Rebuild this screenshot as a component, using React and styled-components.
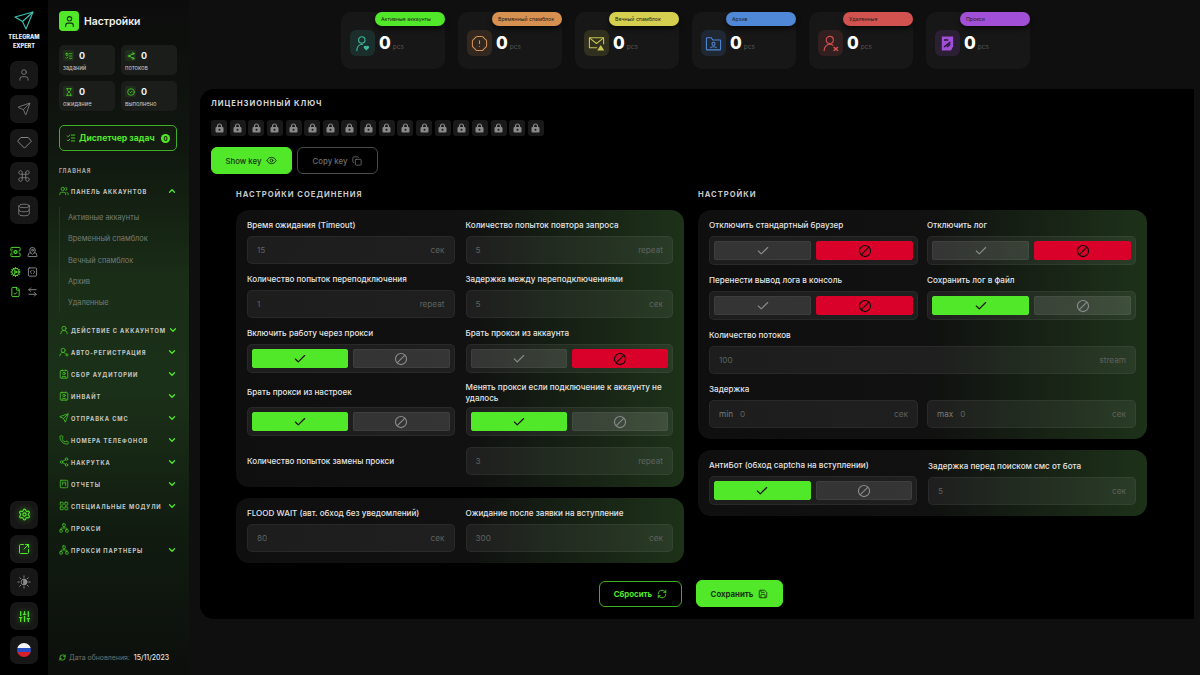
import React from "react";
import styled, { createGlobalStyle } from "styled-components";
import {
  User, Send, Command, Database, ServerCog, MapPinned, Cog, SquareCode, FileCheck, ArrowLeftRight,
  Settings, SquareArrowOutUpRight, SlidersVertical, ChevronDown, ChevronUp, Check, Eye, Copy, Save,
  RefreshCw, Users, UserRound, UserRoundPlus, Contact, Phone, Share2, Network, SquareKanban, ListChecks,
  Hourglass, CircleCheck, ListTodo, LayoutGrid, OctagonAlert,
} from "lucide-react";

const GREEN = "#52e82a";
const RED = "#d90029";

const GlobalStyle = createGlobalStyle`
  html, body { margin: 0; padding: 0; background: #0f0f0f; }
  body { font-family: "Inter", "Noto Sans", sans-serif; color: #eee; }
  * { box-sizing: border-box; }
`;

const Page = styled.div`
  display: flex;
  width: 1200px;
  height: 675px;
  overflow: hidden;
  background: #0f0f0f;
`;

const Rail = styled.aside`
  width: 48px;
  flex: none;
  background: #000;
  display: flex;
  flex-direction: column;
  align-items: center;
  padding-top: 11px;
`;

const Logo = styled.div`
  display: flex;
  flex-direction: column;
  align-items: center;
  font-size: 5.6px;
  line-height: 8.5px;
  font-weight: 800;
  color: #f0f0f0;
  text-align: center;
  margin-bottom: 11px;
  svg { margin-bottom: 3px; }
`;

const RailGroup = styled.div`
  display: flex;
  flex-direction: column;
  gap: 5.8px;
`;

const RailButton = styled.div`
  width: 28px;
  height: 28px;
  border-radius: 7px;
  background: #171717;
  display: flex;
  align-items: center;
  justify-content: center;
  color: ${(p) => (p.$on ? GREEN : "#8b8b8b")};
  svg { filter: ${(p) => (p.$on ? `drop-shadow(0 0 3px ${GREEN}99)` : "none")}; }
`;

const MiniGrid = styled.div`
  display: grid;
  grid-template-columns: 11px 11px;
  gap: 9px 6px;
  margin-top: 22px;
`;

const MiniIcon = styled.div`
  height: 11px;
  display: flex;
  align-items: center;
  justify-content: center;
  color: ${(p) => (p.$on ? GREEN : "#8e8e8e")};
`;

const RailBottom = styled(RailGroup)`
  margin-top: auto;
  margin-bottom: 11px;
`;

const Flag = styled.div`
  width: 14px;
  height: 14px;
  border-radius: 50%;
  background: linear-gradient(180deg, #f4f4f4 0 33%, #2b4fc0 33% 66%, #d6202c 66%);
`;

const Sidebar = styled.nav`
  width: 141px;
  flex: none;
  padding: 11px 12px 0 11px;
  display: flex;
  flex-direction: column;
  background: linear-gradient(180deg, #0c0c0c 0%, #10170f 22%, #1a2e17 42%, #1b3018 58%, #111c10 78%, #0c0f0c 100%);
`;

const Head = styled.div`
  display: flex;
  align-items: center;
  gap: 5px;
  font-size: 10.4px;
  font-weight: 600;
  color: #f2f2f2;
`;

const HeadIcon = styled.div`
  width: 20px;
  height: 20px;
  border-radius: 4px;
  background: ${GREEN};
  color: #14330c;
  display: flex;
  align-items: center;
  justify-content: center;
`;

const StatGrid = styled.div`
  display: grid;
  grid-template-columns: 56px 56px;
  gap: 6px;
  margin-top: 14px;
`;

const StatCard = styled.div`
  height: 30px;
  border-radius: 5px;
  background: #1b1d1b;
  padding: 5px 4px 0;
`;

const StatTop = styled.div`
  display: flex;
  align-items: center;
  gap: 5px;
  color: ${GREEN};
  font-size: 9px;
  line-height: 10px;
  font-weight: 700;
  b { color: #f2f2f2; font-weight: 700; }
`;

const StatIcon = styled.span`
  width: 11px;
  height: 11px;
  border-radius: 2px;
  background: #1f2f1b;
  display: flex;
  align-items: center;
  justify-content: center;
`;

const StatLabel = styled.div`
  font-size: 5.8px;
  color: #c9c9c9;
  margin-top: 3px;
  line-height: 7px;
`;

const Dispatcher = styled.div`
  margin-top: 14px;
  height: 26px;
  border: 1px solid #3fae24;
  border-radius: 5px;
  background: #141c12;
  padding: 0 6px;
  display: flex;
  align-items: center;
  gap: 3px;
  color: ${GREEN};
  font-size: 8.6px;
  font-weight: 700;
  white-space: nowrap;
`;

const Count = styled.span`
  margin-left: auto;
  width: 9px;
  height: 9px;
  border-radius: 50%;
  background: ${GREEN};
  color: #0e2a07;
  font-size: 6px;
  font-weight: 800;
  display: flex;
  align-items: center;
  justify-content: center;
`;

const SectionTitle = styled.div`
  margin: 16px 0 5px;
  font-size: 5.6px;
  line-height: 8px;
  font-weight: 700;
  letter-spacing: 0.8px;
  color: #a9aba9;
`;

const MenuRow = styled.div`
  height: 22px;
  display: flex;
  align-items: center;
  gap: 2px;
  font-size: 5.7px;
  font-weight: 700;
  letter-spacing: 0.9px;
  color: #c6c8c6;
  white-space: nowrap;
`;

const MenuIcon = styled.span`
  display: flex;
  flex: none;
  color: ${GREEN};
  opacity: 0.8;
`;

const Chevron = styled.span`
  margin-left: auto;
  color: ${GREEN};
  display: flex;
`;

const SubList = styled.div`
  margin: 5px 0 6px;
  border-left: 1px solid #253423;
  padding-left: 8px;
`;

const SubItem = styled.div`
  height: 21.3px;
  display: flex;
  align-items: center;
  font-size: 7.4px;
  color: #767c75;
`;

const Updated = styled.div`
  margin-top: auto;
  margin-bottom: 13px;
  display: flex;
  align-items: center;
  gap: 2px;
  font-size: 6.9px;
  color: #6e736d;
  white-space: nowrap;
  svg { color: ${GREEN}; margin-right: 1px; }
  b { font-weight: 500; color: #e2e2e2; margin-left: 2px; }
`;

const Main = styled.main`
  flex: 1;
  min-width: 0;
  padding: 12px 0 0 11px;
  display: flex;
  flex-direction: column;
`;

const TopRow = styled.div`
  display: flex;
  gap: 13px;
  padding-left: 141px;
  height: 77px;
`;

const TopCard = styled.div`
  position: relative;
  width: 104px;
  height: 57px;
  border-radius: 10px;
  background: #171717;
  padding: 18px 0 0 9px;
  display: flex;
  gap: 4px;
`;

const TopBadge = styled.div`
  position: absolute;
  top: 0;
  right: 0;
  width: 70px;
  height: 14px;
  border-radius: 7px;
  background: ${(p) => p.$c};
  box-shadow: 0 3px 5px rgba(0, 0, 0, 0.6);
  color: #222;
  font-size: 5.2px;
  line-height: 14px;
  padding-left: 6px;
  white-space: nowrap;
`;

const TopIcon = styled.div`
  width: 25px;
  height: 26px;
  border-radius: 6px;
  background: ${(p) => p.$c}26;
  color: ${(p) => p.$c};
  display: flex;
  align-items: center;
  justify-content: center;
`;

const TopValue = styled.div`
  font-size: 17px;
  line-height: 26px;
  font-weight: 800;
  color: #fff;
  span { font-size: 6.5px; font-weight: 400; color: #555; margin-left: 2px; }
`;

const Panel = styled.section`
  width: 994px;
  height: 530px;
  background: #000;
  border-radius: 14px 0 0 14px;
  padding: 10px 0 0 11px;
`;

const PanelTitle = styled.div`
  font-size: 7.6px;
  line-height: 10px;
  font-weight: 700;
  letter-spacing: 1px;
  color: #d6d6d6;
`;

const KeyRow = styled.div`
  display: flex;
  gap: 2.65px;
  margin-top: 11px;
`;

const KeyCell = styled.div`
  width: 16px;
  height: 16px;
  border-radius: 3px;
  background: #191919;
  color: #8a8a8a;
  display: flex;
  align-items: center;
  justify-content: center;
`;

const Buttons = styled.div`
  display: flex;
  gap: 5px;
  margin-top: 11px;
`;

const Btn = styled.div`
  width: ${(p) => p.$w || 81}px;
  height: ${(p) => p.$h || 27}px;
  border-radius: 6px;
  display: flex;
  align-items: center;
  justify-content: center;
  gap: 5px;
  font-size: 7.8px;
  font-weight: ${(p) => p.$weight || 500};
  background: ${(p) => (p.$kind === "solid" ? GREEN : "transparent")};
  color: ${(p) => (p.$kind === "solid" ? "#16330d" : p.$kind === "green" ? GREEN : "#6e6e6e")};
  border: 1px solid ${(p) => (p.$kind === "solid" ? GREEN : p.$kind === "green" ? "#3fae24" : "#4a4a4a")};
`;

const Columns = styled.div`
  display: grid;
  grid-template-columns: 448px 449px;
  gap: 14px;
  margin: 16px 0 0 25px;
`;

const Column = styled.div`
  display: flex;
  flex-direction: column;
  gap: 11px;
`;

const ColumnTitle = styled(PanelTitle)`
  margin-bottom: -1px;
  color: #c8c8c8;
`;

const Card = styled.div`
  border-radius: 13px;
  padding: 9px 11px 11px;
  background: linear-gradient(90deg, #0f0f0f 0%, #101110 52%, #1d3219 100%);
  display: grid;
  grid-template-columns: 1fr 1fr;
  gap: 9px ${(p) => p.$gap || 11}px;
`;

const Field = styled.div`
  display: flex;
  flex-direction: column;
  grid-column: ${(p) => (p.$wide ? "1 / -1" : "auto")};
`;

const FieldLabel = styled.div`
  flex: 1;
  display: flex;
  align-items: center;
  min-height: 13px;
  margin-bottom: 4px;
  font-size: 8.1px;
  line-height: 10.5px;
  font-weight: 500;
  color: #e4e4e4;
`;

const InlineLabel = styled(FieldLabel)`
  flex: none;
  margin: 2px 0 0;
  height: 29px;
`;

const Input = styled.div`
  height: 28px;
  margin-top: ${(p) => p.$top || 0}px;
  border-radius: 5px;
  background: rgba(255, 255, 255, 0.06);
  border: 1px solid rgba(255, 255, 255, 0.05);
  padding: 0 9px;
  display: flex;
  align-items: center;
  justify-content: space-between;
  gap: 6px;
  font-size: 8.2px;
  color: #5f625f;
`;

const Prefix = styled.span`
  color: #7a7d7a;
  margin-right: 1px;
`;

const Value = styled.span`
  flex: 1;
`;

const Toggle = styled.div`
  height: 29px;
  border-radius: 5px;
  background: rgba(255, 255, 255, 0.06);
  border: 1px solid rgba(255, 255, 255, 0.05);
  padding: 4px;
  display: grid;
  grid-template-columns: 1fr 1fr;
  gap: 5px;
`;

const ToggleSide = styled.div`
  border-radius: 2px;
  display: flex;
  align-items: center;
  justify-content: center;
  background: ${(p) => p.$bg || "rgba(255,255,255,0.1)"};
  border: 1px solid ${(p) => p.$bg || "rgba(255,255,255,0.05)"};
  color: ${(p) => (p.$bg ? "#0b0b0b" : "#8a8a8a")};
`;

const Footer = styled.div`
  display: flex;
  align-items: center;
  gap: 14px;
  margin: 17px 0 0 388px;
`;

const BanIcon = ({ size = 14 }) => (
  <svg width={size} height={size} viewBox="0 0 24 24" fill="none" stroke="currentColor" strokeWidth="2">
    <circle cx="12" cy="12" r="9.5" />
    <path d="M18.7 5.3 5.3 18.7" />
  </svg>
);

const GemOutline = () => (
  <svg width="15" height="15" viewBox="0 0 24 24" fill="none" stroke="currentColor" strokeWidth="1.5" strokeLinejoin="round">
    <path d="M6 4h12l5 6-11 11L1 10Z" />
  </svg>
);

const HalfSun = () => (
  <svg width="14" height="14" viewBox="0 0 24 24" fill="none" stroke="currentColor" strokeWidth="1.6" strokeLinecap="round">
    <circle cx="12" cy="12" r="5" />
    <path d="M12 7a5 5 0 0 1 0 10Z" fill="currentColor" />
    <path d="M12 1.5v2.5M12 20v2.5M1.5 12H4M20 12h2.5M4.6 4.6l1.8 1.8M17.6 17.6l1.8 1.8M4.6 19.4l1.8-1.8M17.6 6.4l1.8-1.8" />
  </svg>
);

const SolidLock = () => (
  <svg width="9" height="10" viewBox="0 0 18 20" fill="none">
    <path d="M5 9V6a4 4 0 0 1 8 0v3" stroke="currentColor" strokeWidth="2.4" />
    <rect x="1" y="8" width="16" height="11" rx="2" fill="currentColor" />
    <circle cx="9" cy="13.5" r="2" fill="#191919" />
  </svg>
);

const ActiveIcon = () => (
  <svg width="17" height="17" viewBox="0 0 24 24" fill="none" stroke="currentColor" strokeWidth="1.6" strokeLinecap="round">
    <circle cx="11" cy="7" r="4.5" />
    <path d="M4 22c0-5 3-9 8-9" />
    <path d="M17.5 22l-3.6-3.6a2.2 2.2 0 0 1 3.6-2.5 2.2 2.2 0 0 1 3.6 2.5Z" fill="currentColor" stroke="none" />
  </svg>
);

const SpamIcon = () => (
  <svg width="17" height="17" viewBox="0 0 24 24" fill="none" stroke="currentColor" strokeWidth="1.5" strokeLinejoin="round">
    <path d="M13 18H2V4h20v9" />
    <path d="M2 4l10 8 10-8" />
    <path d="M18 14l5 8H13Z" fill="currentColor" stroke="none" />
  </svg>
);

const ArchiveIcon = () => (
  <svg width="17" height="17" viewBox="0 0 24 24" fill="none" stroke="currentColor" strokeWidth="1.5" strokeLinejoin="round">
    <path d="M2 5a1 1 0 0 1 1-1h6l2 3h10a1 1 0 0 1 1 1v12a1 1 0 0 1-1 1H3a1 1 0 0 1-1-1Z" />
    <circle cx="12" cy="12.5" r="2.2" />
    <path d="M7.5 18.5c1-2.5 8-2.5 9 0" />
  </svg>
);

const RemovedIcon = () => (
  <svg width="17" height="17" viewBox="0 0 24 24" fill="none" stroke="currentColor" strokeWidth="1.6" strokeLinecap="round">
    <circle cx="11" cy="7" r="5" />
    <path d="M3 22c0-5 3.500-9 8-9 1.800 0 3.300.5 4.500 1.500" />
    <path d="M17 17.500l5 4.500M22 17.500 17 22" strokeWidth="2" />
  </svg>
);

const ProxyIcon = () => (
  <svg width="17" height="17" viewBox="0 0 24 24" fill="none">
    <path d="M4 2h16v14l-3 6H4Z" fill="currentColor" />
    <path d="M7 7h6M7 17l9-7M11 17l5-4" stroke="#241630" strokeWidth="2" />
  </svg>
);

const YesNo = ({ yes }) => (
  <Toggle>
    <ToggleSide $bg={yes === true ? GREEN : undefined}>
      <Check size={14} strokeWidth={2} />
    </ToggleSide>
    <ToggleSide $bg={yes === false ? RED : undefined}>
      <BanIcon />
    </ToggleSide>
  </Toggle>
);

const NumberField = ({ label, value, unit }) => (
  <Field>
    <FieldLabel>{label}</FieldLabel>
    <Input>
      <Value>{value}</Value>
      <span>{unit}</span>
    </Input>
  </Field>
);

const ToggleField = ({ label, yes }) => (
  <Field>
    <FieldLabel>{label}</FieldLabel>
    <YesNo yes={yes} />
  </Field>
);

const topCards = [
  { label: "Активные аккаунты", color: GREEN, iconColor: "#3fb8a0", icon: <ActiveIcon /> },
  { label: "Временный спамблок", color: "#d69050", iconColor: "#d69050", icon: <OctagonAlert size={17} strokeWidth={1.5} /> },
  { label: "Вечный спамблок", color: "#d4cf4e", iconColor: "#c9c44c", icon: <SpamIcon /> },
  { label: "Архив", color: "#4f88d6", iconColor: "#4f88d6", icon: <ArchiveIcon /> },
  { label: "Удаленные", color: "#d2524f", iconColor: "#d2524f", icon: <RemovedIcon /> },
  { label: "Прокси", color: "#a14fd6", iconColor: "#a14fd6", icon: <ProxyIcon /> },
];

const stats = [
  { label: "заданий", Icon: ListTodo },
  { label: "потоков", Icon: Share2 },
  { label: "ожидание", Icon: Hourglass },
  { label: "выполнено", Icon: CircleCheck },
];

const subItems = ["Активные аккаунты", "Временный спамблок", "Вечный спамблок", "Архив", "Удаленные"];

const menu = [
  { label: "ДЕЙСТВИЕ С АККАУНТОМ", Icon: UserRound },
  { label: "АВТО-РЕГИСТРАЦИЯ", Icon: UserRoundPlus },
  { label: "СБОР АУДИТОРИИ", Icon: Contact },
  { label: "ИНВАЙТ", Icon: Contact },
  { label: "ОТПРАВКА СМС", Icon: Send },
  { label: "НОМЕРА ТЕЛЕФОНОВ", Icon: Phone },
  { label: "НАКРУТКА", Icon: Share2 },
  { label: "ОТЧЕТЫ", Icon: SquareKanban },
  { label: "СПЕЦИАЛЬНЫЕ МОДУЛИ", Icon: LayoutGrid },
  { label: "ПРОКСИ", Icon: Network, plain: true },
  { label: "ПРОКСИ ПАРТНЕРЫ", Icon: Network },
];

export default function App() {
  return (
    <Page>
      <GlobalStyle />
      <Rail>
        <Logo>
          <svg width="20" height="19" viewBox="0 0 20 19" fill="none" stroke="#3fc4b4" strokeWidth="1.1" strokeLinejoin="round">
            <path d="M1 6 19 1 12 18 8.5 10.5Z" />
            <path d="M19 1 8.5 10.5" />
          </svg>
          <span>TELEGRAM</span>
          <span>EXPERT</span>
        </Logo>
        <RailGroup>
          <RailButton><User size={14} strokeWidth={1.3} /></RailButton>
          <RailButton><Send size={14} strokeWidth={1.3} /></RailButton>
          <RailButton><GemOutline /></RailButton>
          <RailButton><Command size={14} strokeWidth={1.3} /></RailButton>
          <RailButton><Database size={14} strokeWidth={1.3} /></RailButton>
        </RailGroup>
        <MiniGrid>
          <MiniIcon $on><ServerCog size={12} /></MiniIcon>
          <MiniIcon><MapPinned size={12} /></MiniIcon>
          <MiniIcon $on><Cog size={12} /></MiniIcon>
          <MiniIcon><SquareCode size={12} /></MiniIcon>
          <MiniIcon $on><FileCheck size={12} /></MiniIcon>
          <MiniIcon><ArrowLeftRight size={12} /></MiniIcon>
        </MiniGrid>
        <RailBottom>
          <RailButton $on><Settings size={13} /></RailButton>
          <RailButton $on><SquareArrowOutUpRight size={12} /></RailButton>
          <RailButton><HalfSun /></RailButton>
          <RailButton $on><SlidersVertical size={13} strokeWidth={2.4} /></RailButton>
          <RailButton><Flag /></RailButton>
        </RailBottom>
      </Rail>

      <Sidebar>
        <Head>
          <HeadIcon><User size={13} /></HeadIcon>
          Настройки
        </Head>
        <StatGrid>
          {stats.map(({ label, Icon }) => (
            <StatCard key={label}>
              <StatTop>
                <StatIcon><Icon size={8} /></StatIcon>
                <b>0</b>
              </StatTop>
              <StatLabel>{label}</StatLabel>
            </StatCard>
          ))}
        </StatGrid>
        <Dispatcher>
          <ListChecks size={10} />
          Диспетчер задач
          <Count>0</Count>
        </Dispatcher>
        <SectionTitle>ГЛАВНАЯ</SectionTitle>
        <MenuRow>
          <MenuIcon><Users size={10} /></MenuIcon>
          ПАНЕЛЬ АККАУНТОВ
          <Chevron><ChevronUp size={10} strokeWidth={3} /></Chevron>
        </MenuRow>
        <SubList>
          {subItems.map((item) => (
            <SubItem key={item}>{item}</SubItem>
          ))}
        </SubList>
        {menu.map(({ label, Icon, plain }) => (
          <MenuRow key={label}>
            <MenuIcon><Icon size={10} /></MenuIcon>
            {label}
            {!plain && <Chevron><ChevronDown size={10} strokeWidth={3} /></Chevron>}
          </MenuRow>
        ))}
        <Updated>
          <RefreshCw size={7} strokeWidth={2.5} />
          Дата обновления:
          <b>15/11/2023</b>
        </Updated>
      </Sidebar>

      <Main>
        <TopRow>
          {topCards.map(({ label, color, iconColor, icon }) => (
            <TopCard key={label}>
              <TopBadge $c={color}>{label}</TopBadge>
              <TopIcon $c={iconColor}>{icon}</TopIcon>
              <TopValue>0<span>pcs</span></TopValue>
            </TopCard>
          ))}
        </TopRow>

        <Panel>
          <PanelTitle>ЛИЦЕНЗИОННЫЙ КЛЮЧ</PanelTitle>
          <KeyRow>
            {Array.from({ length: 18 }, (_, i) => (
              <KeyCell key={i}><SolidLock /></KeyCell>
            ))}
          </KeyRow>
          <Buttons>
            <Btn $kind="solid">Show key <Eye size={11} /></Btn>
            <Btn>Copy key <Copy size={10} /></Btn>
          </Buttons>
          <Columns>
            <Column>
              <ColumnTitle>НАСТРОЙКИ СОЕДИНЕНИЯ</ColumnTitle>
              <Card>
                <NumberField label="Время ожидания (Timeout)" value="15" unit="сек" />
                <NumberField label="Количество попыток повтора запроса" value="5" unit="repeat" />
                <NumberField label="Количество попыток переподключения" value="1" unit="repeat" />
                <NumberField label="Задержка между переподключениями" value="5" unit="сек" />
                <ToggleField label="Включить работу через прокси" yes />
                <ToggleField label="Брать прокси из аккаунта" yes={false} />
                <ToggleField label="Брать прокси из настроек" yes />
                <ToggleField label="Менять прокси если подключение к аккаунту не удалось" yes />
                <InlineLabel>Количество попыток замены прокси</InlineLabel>
                <Input $top={2}>
                  <Value>3</Value>
                  <span>repeat</span>
                </Input>
              </Card>
              <Card>
                <NumberField label="FLOOD WAIT (авт. обход без уведомлений)" value="80" unit="сек" />
                <NumberField label="Ожидание после заявки на вступление" value="300" unit="сек" />
              </Card>
            </Column>
            <Column>
              <ColumnTitle>НАСТРОЙКИ</ColumnTitle>
              <Card $gap={9}>
                <ToggleField label="Отключить стандартный браузер" yes={false} />
                <ToggleField label="Отключить лог" yes={false} />
                <ToggleField label="Перенести вывод лога в консоль" yes={false} />
                <ToggleField label="Сохранить лог в файл" yes />
                <Field $wide>
                  <FieldLabel>Количество потоков</FieldLabel>
                  <Input>
                    <Value>100</Value>
                    <span>stream</span>
                  </Input>
                </Field>
                <Field>
                  <FieldLabel>Задержка</FieldLabel>
                  <Input>
                    <Prefix>min</Prefix>
                    <Value>0</Value>
                    <span>сек</span>
                  </Input>
                </Field>
                <Field>
                  <FieldLabel>&nbsp;</FieldLabel>
                  <Input>
                    <Prefix>max</Prefix>
                    <Value>0</Value>
                    <span>сек</span>
                  </Input>
                </Field>
              </Card>
              <Card>
                <ToggleField label="АнтиБот (обход captcha на вступлении)" yes />
                <NumberField label="Задержка перед поиском смс от бота" value="5" unit="сек" />
              </Card>
            </Column>
          </Columns>
          <Footer>
            <Btn $kind="green" $w={83} $h={26} $weight={700}>Сбросить <RefreshCw size={10} /></Btn>
            <Btn $kind="solid" $w={87} $weight={700}>Сохранить <Save size={10} /></Btn>
          </Footer>
        </Panel>
      </Main>
    </Page>
  );
}
